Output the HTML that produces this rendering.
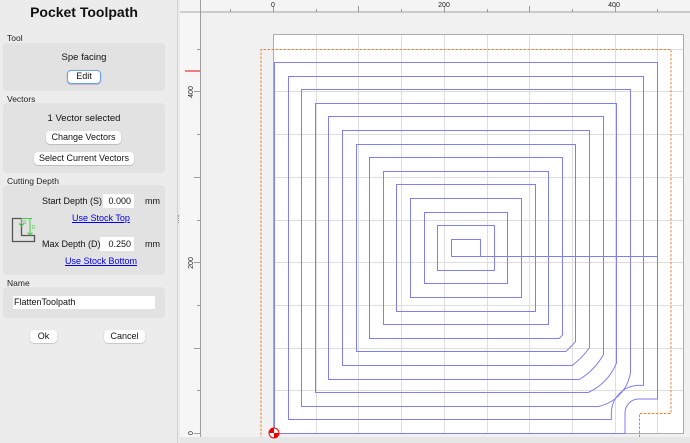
<!DOCTYPE html>
<html><head><meta charset="utf-8">
<style>
*{box-sizing:border-box;margin:0;padding:0}
body{width:690px;height:443px;overflow:hidden;background:#ececec;font-family:"Liberation Sans",Arial,sans-serif;position:relative;color:#111}
.a{position:absolute}
.lbl{font-size:8.5px;color:#222;z-index:2;line-height:9px}
.box{position:absolute;left:3px;width:162px;background:#e2e2e2;border-radius:4px}
.t{position:absolute;font-size:9.5px;white-space:nowrap}
.btn{position:absolute;background:#fff;border-radius:4px;font-size:9px;text-align:center;line-height:13px;box-shadow:0 0.5px 1px rgba(0,0,0,.3);white-space:nowrap}
.inp{position:absolute;background:#fff;font-size:9px;line-height:14px;padding:0 3px}
.lnk{position:absolute;font-size:9px;color:#0000ee;text-decoration:underline;white-space:nowrap}
</style></head><body>
<div class="a" style="left:0;top:4px;width:168px;text-align:center;font-size:14px;font-weight:bold">Pocket Toolpath</div>
<div class="box" style="top:43px;height:48px"></div>
<div class="a lbl" style="left:7px;top:34px">Tool</div>
<div class="t" style="left:0;width:168px;text-align:center;top:52px">Spe facing</div>
<div class="btn" style="left:67px;top:70px;width:34px;height:14px;border:1.5px solid #6aa0f0;line-height:11px">Edit</div>
<div class="box" style="top:103px;height:70px"></div>
<div class="a lbl" style="left:7px;top:95px">Vectors</div>
<div class="t" style="left:0;width:168px;text-align:center;top:113px">1 Vector selected</div>
<div class="btn" style="left:46px;top:131px;width:75px;height:13px">Change Vectors</div>
<div class="btn" style="left:34px;top:152px;width:100px;height:13px">Select Current Vectors</div>
<div class="box" style="top:185px;height:90px"></div>
<div class="a lbl" style="left:7px;top:177px">Cutting Depth</div>
<div class="t" style="left:42px;top:196px;font-size:9px">Start Depth (S)</div>
<div class="inp" style="left:103px;top:194px;width:31px;text-align:right">0.000</div>
<div class="t" style="left:145px;top:196px;font-size:9px">mm</div>
<div class="lnk" style="left:72px;top:213px">Use Stock Top</div>
<svg class="a" style="left:10px;top:214px" width="30" height="30">
<path d="M2.5 4.5V27.5H24.5V21.5H11.5V4.5Z" fill="none" stroke="#555" stroke-width="1.3"/>
<path d="M11 4.5H16M11.5 4.5V10M9 9.5L11.5 12L14 9.5M20 4.5V21M17.5 18.5L20 21L22.5 18.5M16 4.5H22" fill="none" stroke="#4c4" stroke-width="1"/>
<text x="13" y="10" font-size="5" fill="#4c4" font-family="Liberation Sans">S</text>
<text x="21.5" y="15" font-size="5" fill="#4c4" font-family="Liberation Sans">D</text>
</svg>
<div class="t" style="left:42px;top:239px;font-size:9px">Max Depth (D)</div>
<div class="inp" style="left:100px;top:237px;width:34px;text-align:right">0.250</div>
<div class="t" style="left:145px;top:239px;font-size:9px">mm</div>
<div class="lnk" style="left:65px;top:256px">Use Stock Bottom</div>
<div class="box" style="top:287px;height:31px"></div>
<div class="a lbl" style="left:7px;top:279px">Name</div>
<div class="inp" style="left:13px;top:296px;width:142px;height:13px;line-height:13px;padding-left:1px">FlattenToolpath</div>
<div class="btn" style="left:30px;top:330px;width:27px;height:13px">Ok</div>
<div class="btn" style="left:104px;top:330px;width:41px;height:13px">Cancel</div>
<div class="a" style="left:177px;top:0;width:1px;height:443px;background:#d0d0d0"></div>
<div class="a" style="left:178px;top:215px;width:2px;height:8px;border-left:1px dotted #999"></div>
<svg class="a" style="left:0;top:0" width="690" height="443" id="cv">
<rect x="180" y="0" width="510" height="443" fill="#f1f1f1"/>
<rect x="180" y="0" width="510" height="12" fill="#f4f4f4"/>
<rect x="180" y="12" width="21" height="431" fill="#f6f6f6"/>
<line x1="180" y1="12" x2="690" y2="12" stroke="#888" stroke-width="0.8"/>
<line x1="200.5" y1="0" x2="200.5" y2="443" stroke="#888" stroke-width="0.8"/>
<line x1="185" y1="71" x2="200" y2="71" stroke="#e00" stroke-width="1"/>
<g id="ticks" stroke="#777" stroke-width="0.7"></g>
<g font-size="7" fill="#222" font-family="Liberation Sans" text-anchor="middle">
<text x="273" y="7">0</text><text x="444" y="7">200</text><text x="614" y="7">400</text>
<text transform="translate(193,92) rotate(-90)">400</text>
<text transform="translate(193,263) rotate(-90)">200</text>
<text transform="translate(193,433) rotate(-90)">0</text>
</g>
<rect x="273.5" y="34.5" width="410" height="399" fill="#fff" stroke="#999" stroke-width="0.8"/>
<g id="grid" stroke="#dedede" stroke-width="1"></g>
<g id="paths" fill="none" stroke="#7f7ff2" stroke-width="1"></g>
<path d="M261 443V49.5H671V413.5H639.5V443" fill="none" stroke="#f08030" stroke-width="1" stroke-dasharray="2.5,1.5"/>
<rect x="180" y="437" width="510" height="6" fill="#e6e6e6"/>
<circle cx="274" cy="433" r="5" fill="#fff" stroke="#e00" stroke-width="1"/>
<path d="M274 433V428A5 5 0 0 0 269 433ZM274 433V438A5 5 0 0 0 279 433Z" fill="#e00"/>
</svg>
<script>
var ns="http://www.w3.org/2000/svg";
function el(p,t,a){var e=document.createElementNS(ns,t);for(var k in a)e.setAttribute(k,a[k]);document.getElementById(p).appendChild(e);}
function h(v){return Math.round(v)+0.5;}
for(var k=-3;k<=11;k++){var x=h(273+42.7*k);if(x>200)el("ticks","line",{x1:x,y1:k%2?9:6,x2:x,y2:12});}
for(var k=0;k<=9;k++){var y=h(433-42.7*k);el("ticks","line",{x1:k%2?197:194,y1:y,x2:200,y2:y});}
for(var k=1;k<=9;k++){var x=h(273+42.7*k);if(x<683)el("grid","line",{x1:x,y1:35,x2:x,y2:433});}
for(var k=1;k<=9;k++){var y=h(433-42.7*k);if(y>35)el("grid","line",{x1:274,y1:y,x2:683,y2:y});}
var Px=639,Py=413,s=13.6;
for(var i=0;i<14;i++){
var l=h(274+s*i),t=h(62+s*i),r=h(657-s*i),b=h(433-s*i),R=14+s*i,d;
if(r>Px){d="M"+(Px-R)+" "+b+"H"+l+"V"+t+"H"+r+"V"+(Py-R)+"H"+Px+"A"+R+" "+R+" 0 0 0 "+(Px-R)+" "+Py+"Z";}
else{var dx=Px-r,dy=Py-b;
 if(Math.sqrt(dx*dx+dy*dy)<R){var y1=Py-Math.sqrt(R*R-dx*dx),x1=Px-Math.sqrt(R*R-dy*dy);
  d="M"+l+" "+t+"H"+r+"V"+y1+"A"+R+" "+R+" 0 0 1 "+x1+" "+b+"H"+l+"Z";}
 else d="M"+l+" "+t+"H"+r+"V"+b+"H"+l+"Z";}
if(i==13)d="M"+r+" "+b+"V"+t+"H"+l+"V"+b+"H657.5";
el("paths","path",{d:d});}
</script>
</body></html>
